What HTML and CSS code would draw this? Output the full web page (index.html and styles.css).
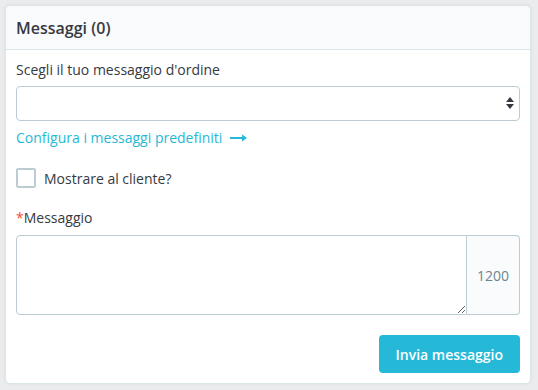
FILE: index.html
```html
<!DOCTYPE html>
<html lang="it">
<head>
  <meta charset="UTF-8" />
  <meta name="viewport" content="width=device-width, initial-scale=1.0" />
  <title>Messaggi</title>
  <link rel="stylesheet" href="styles.css">
</head>
<body>
  <section class="card">
    <div class="card-header">
      <h3>Messaggi (0)</h3>
    </div>
    <div class="card-body">
      <div class="form-group">
        <label for="order-message">Scegli il tuo messaggio d'ordine</label>
        <div class="select-wrap">
          <select id="order-message"><option></option></select>
          <svg class="select-arrows" width="8" height="12" viewBox="0 0 8 12"><path d="M4 0 L8 5 H0 Z M0 7 H8 L4 12 Z" fill="#363a41"/></svg>
        </div>
        <a class="config-link" href="#">Configura i messaggi predefiniti
          <svg class="arrow" width="17" height="8" viewBox="0 0 17 8"><path d="M0 4 H14" stroke="#25b9d7" stroke-width="2"/><path d="M12 0.5 L17 4 L12 7.5 Z" fill="#25b9d7"/></svg>
        </a>
      </div>

      <div class="form-check">
        <span class="check-box"></span>
        <span>Mostrare al cliente?</span>
      </div>

      <div class="form-group">
        <label for="message"><span class="required">*</span>Messaggio</label>
        <div class="input-group">
          <textarea id="message"></textarea>
          <div class="input-addon">1200</div>
        </div>
      </div>

      <div class="actions">
        <button type="button">Invia messaggio</button>
      </div>
    </div>
  </section>
</body>
</html>
```

FILE: styles.css
```css
body {
  margin: 0;
  padding: 5px;
  background-color: #eaecee;
  font-family: 'Open Sans', sans-serif;
  font-size: 14px;
  color: #363a41;
}

.card {
  background-color: #fff;
  border: 1px solid #dbe6e9;
  border-radius: 5px;
  box-shadow: 0 0 4px rgba(0, 0, 0, 0.06);
  width: 526px;
  box-sizing: border-box;
}

.card-header {
  background-color: #fafbfc;
  border-bottom: 1px solid #dbe6e9;
  border-radius: 5px 5px 0 0;
  height: 43px;
  display: flex;
  align-items: center;
  padding: 0 10px;
}

.card-header h3 {
  margin: 0;
  font-size: 16px;
  font-weight: 600;
}

.card-body {
  padding: 10px 10px 10px;
}

.form-group label {
  display: block;
  margin: 0 0 6px;
  line-height: 20px;
}

.required {
  color: #f54c3e;
}

.select-wrap {
  position: relative;
}

select {
  appearance: none;
  width: 100%;
  height: 35px;
  border: 1px solid #bbcdd2;
  border-radius: 4px;
  background: #fff;
  font: inherit;
}

.select-arrows {
  position: absolute;
  right: 6px;
  top: 11px;
}

.config-link {
  display: inline-flex;
  align-items: center;
  gap: 8px;
  margin-top: 7px;
  color: #25b9d7;
  text-decoration: none;
  line-height: 20px;
}

.form-check {
  display: flex;
  align-items: center;
  gap: 8px;
  margin: 20px 0 20px;
}

.check-box {
  width: 16px;
  height: 16px;
  border: 2px solid #bbcdd2;
  border-radius: 2px;
}

.form-check + .form-group label {
  margin-bottom: 7px;
}

.input-group {
  display: flex;
  height: 80px;
}

textarea {
  flex: 1;
  border: 1px solid #bbcdd2;
  border-radius: 4px 0 0 4px;
  font: inherit;
  resize: vertical;
  box-sizing: border-box;
  height: 80px;
}

.input-addon {
  width: 52px;
  display: flex;
  align-items: center;
  justify-content: center;
  background-color: #fafbfc;
  color: #6c868e;
  border: 1px solid #bbcdd2;
  border-left: none;
  border-radius: 0 4px 4px 0;
}

.actions {
  display: flex;
  justify-content: flex-end;
  margin-top: 20px;
}

button {
  background-color: #25b9d7;
  color: #fff;
  border: none;
  border-radius: 4px;
  padding: 0 17px;
  height: 38px;
  font-family: inherit;
  font-size: 14px;
  font-weight: 600;
  cursor: pointer;
}
```
